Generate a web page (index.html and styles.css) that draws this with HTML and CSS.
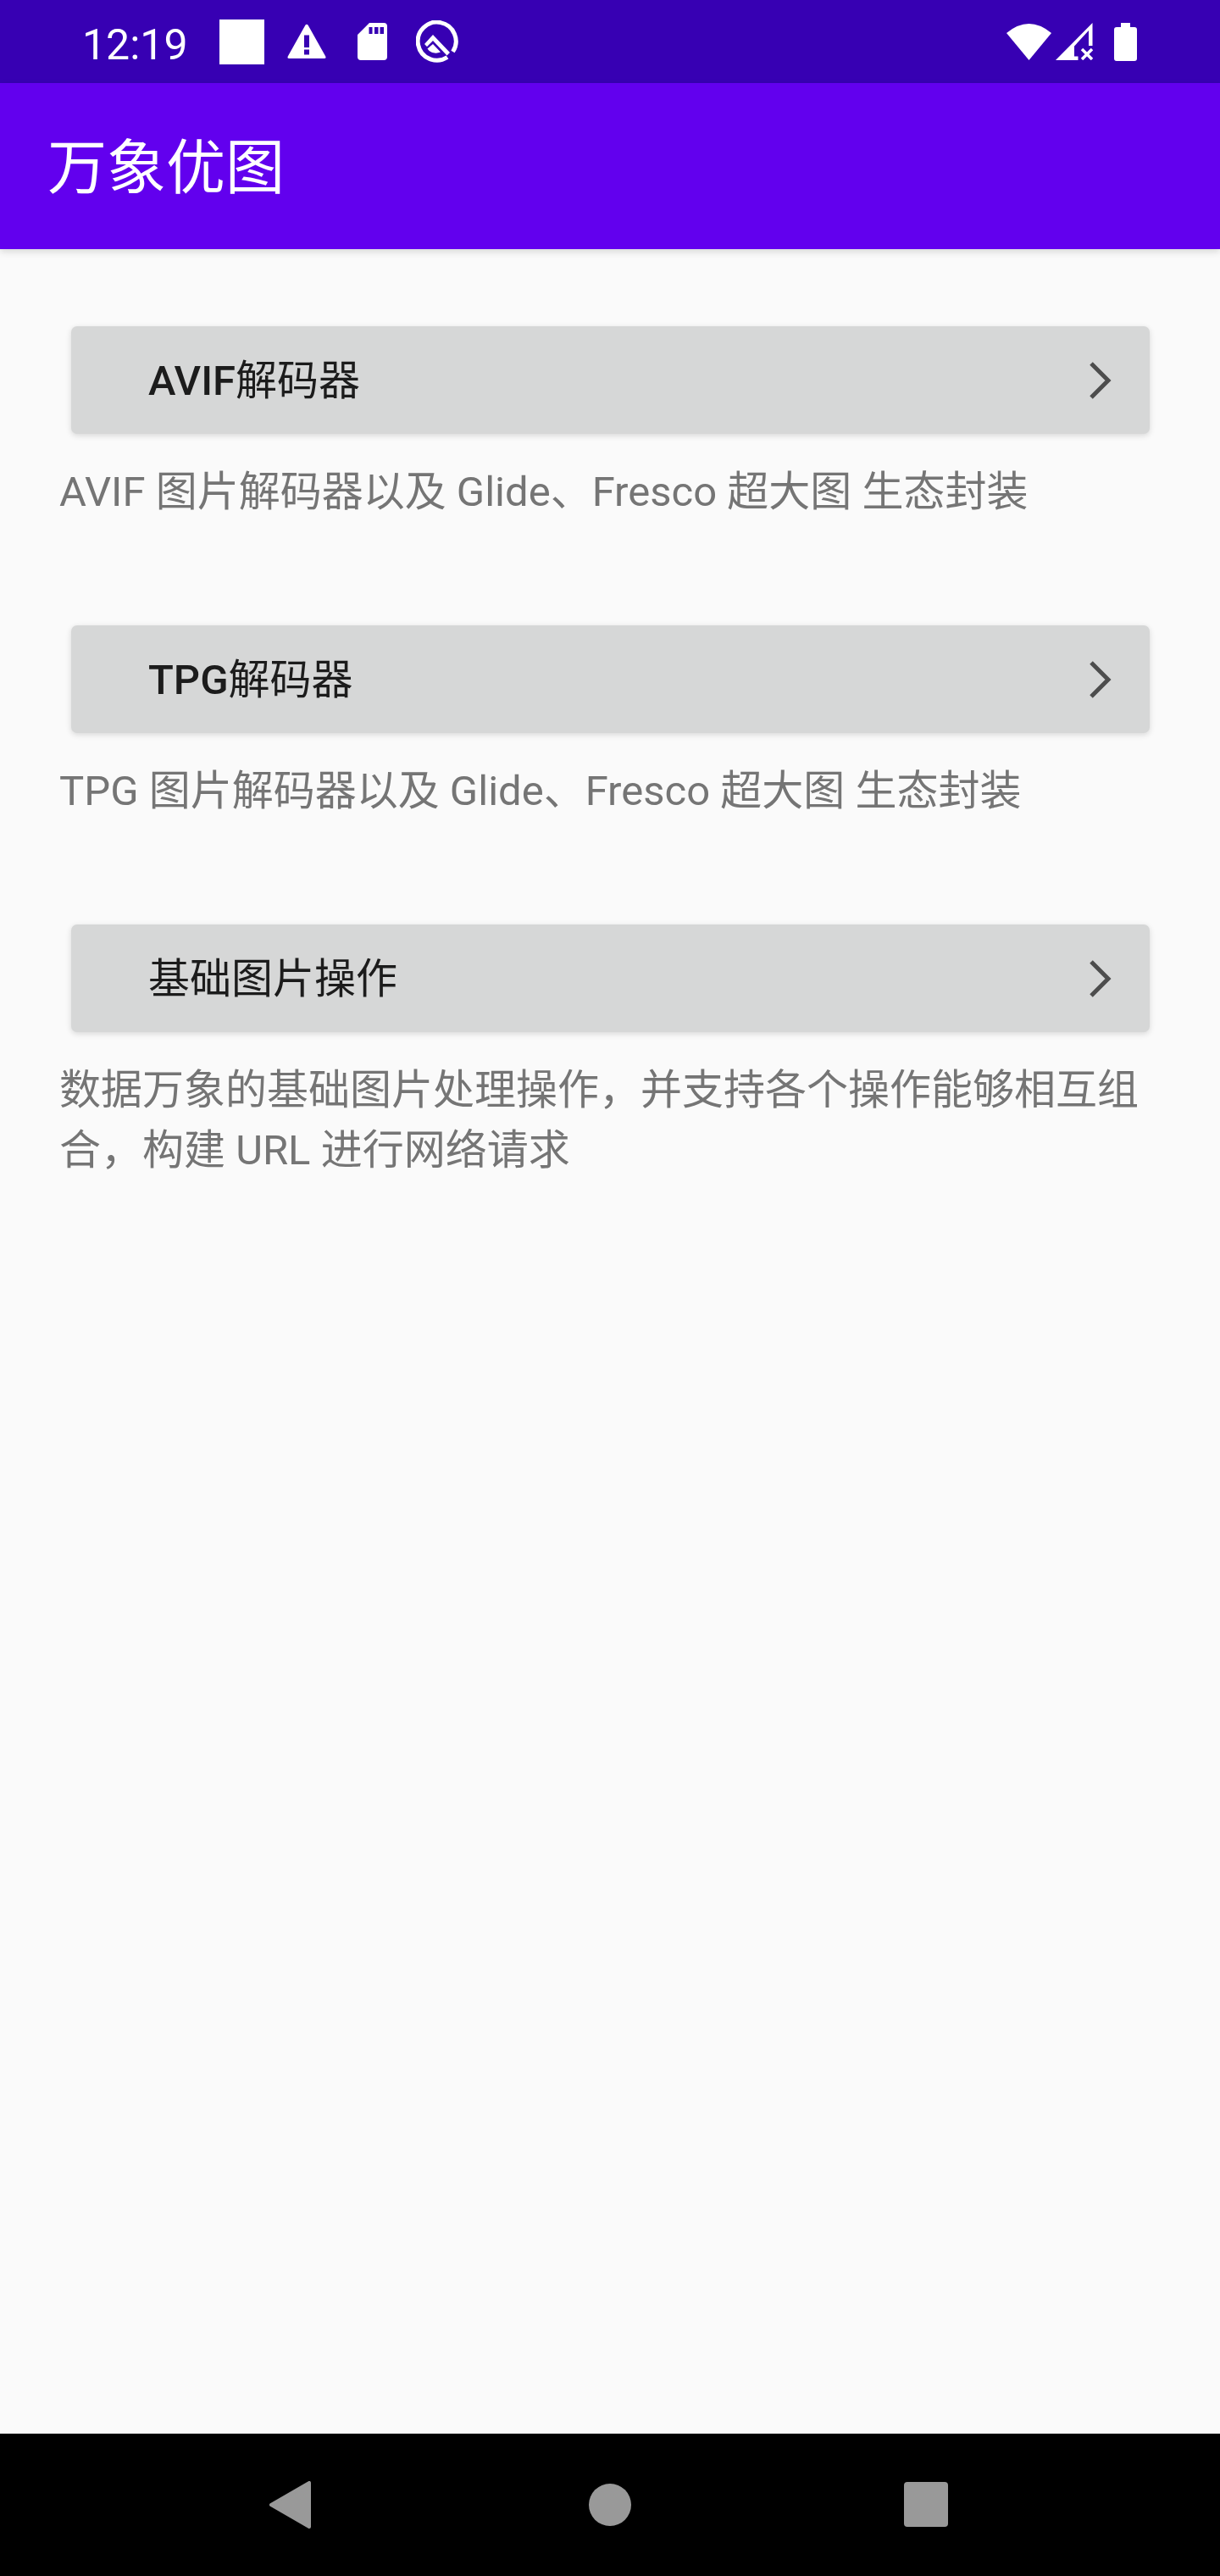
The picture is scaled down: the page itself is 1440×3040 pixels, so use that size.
FILE: index.html
```html
<!DOCTYPE html>
<html lang="zh-CN">
<head>
<meta charset="utf-8">
<title>万象优图</title>
<link rel="stylesheet" href="styles.css">
</head>
<body>
<div class="screen">
  <header class="status-bar">
    <span class="clock">12:19</span>
    <span class="blank-icon"></span>
    <svg class="icon warn" viewBox="0 0 46 42"><path fill="#fff" fill-rule="evenodd" d="M21.500 1.500 Q23 0 24.500 1.500 L45.500 39 Q46 41 44 41 L2 41 Q0 41 .5 39 Z M20 13.500 V28 H26 V13.500 Z M20 30.500 V36.500 H26 V30.500 Z"/></svg>
    <svg class="icon sd" viewBox="0 0 35 44"><path fill="#fff" fill-rule="evenodd" d="M14 0 H31 Q35 0 35 4 V40 Q35 44 31 44 H4 Q0 44 0 40 V14 Z M13.500 5 V13 H17.500 V5 Z M20 5 V13 H24.500 V5 Z M26.500 5 V13 H31 V5 Z"/></svg>
    <svg class="icon q" viewBox="0 0 50 50"><path fill="none" stroke="#fff" stroke-width="5" d="M37 43.500 A22.500 22.500 0 1 1 43.500 37"/><path fill="#fff" d="M20 17 L40 38 L36.500 41.500 L20 24 L13 31 L10 28 Z M20 28 L29 37.500 Q25 39 22 38.500 Q16 38 13.500 33.500 Z"/></svg>
    <span class="status-spacer"></span>
    <svg class="icon wifi" viewBox="0 0 53 44"><path fill="#fff" d="M0 12 Q26.500 -10 53 12 L26.500 44 Z"/></svg>
    <svg class="icon signal" viewBox="0 0 44 44"><path fill="#fff" d="M43.500 0 V27 H39 V9 L22 27.500 V39.500 H26.500 V44 H0 Z"/><path fill="none" stroke="#fff" stroke-width="3.500" d="M31 31 L43 43 M43 31 L31 43"/></svg>
    <svg class="icon battery" viewBox="0 0 27 45"><path fill="#fff" d="M8 0 H19 V5 H24 Q27 5 27 8 V42 Q27 45 24 45 H3 Q0 45 0 42 V8 Q0 5 3 5 H8 Z"/></svg>
  </header>
  <div class="app-bar"><h1 class="app-title">万象优图</h1></div>
  <main class="content">
    <section class="entry">
      <div class="entry-button"><span class="entry-label"><span class="latin">AVIF</span>解码器</span><svg class="chevron" viewBox="0 0 30 46"><path d="M4 3 L24 23 L4 43"/></svg></div>
      <p class="entry-desc">AVIF 图片解码器以及 Glide、Fresco 超大图 生态封装</p>
    </section>
    <section class="entry">
      <div class="entry-button"><span class="entry-label"><span class="latin">TPG</span>解码器</span><svg class="chevron" viewBox="0 0 30 46"><path d="M4 3 L24 23 L4 43"/></svg></div>
      <p class="entry-desc">TPG 图片解码器以及 Glide、Fresco 超大图 生态封装</p>
    </section>
    <section class="entry">
      <div class="entry-button"><span class="entry-label">基础图片操作</span><svg class="chevron" viewBox="0 0 30 46"><path d="M4 3 L24 23 L4 43"/></svg></div>
      <p class="entry-desc">数据万象的基础图片处理操作，并支持各个操作能够相互组合，构建 URL 进行网络请求</p>
    </section>
  </main>
  <footer class="nav-bar">
    <svg class="nav-back" viewBox="0 0 49 56"><path fill="#999" stroke="#999" stroke-width="4" stroke-linejoin="round" d="M2 28 L47 2 V54 Z"/></svg>
    <span class="nav-home"></span>
    <span class="nav-recent"></span>
  </footer>
</div>
</body>
</html>
```
FILE: styles.css
```css
* { box-sizing: border-box; }
html, body { margin: 0; padding: 0; }
body { font-family: Roboto, "Noto Sans CJK SC", sans-serif; background: #fafafa; }
.screen { width: 1440px; height: 3040px; display: flex; flex-direction: column; overflow: hidden; }

.status-bar { height: 98px; flex: none; background: #3700b3; display: flex; align-items: center; padding: 0 98px 0 97px; color: #fff; }
.clock { font-size: 50px; line-height: 1; padding-top: 8px; width: 162px; flex: none; }
.blank-icon { width: 53px; height: 53px; background: #fff; flex: none; margin-right: 27px; }
.icon { display: block; flex: none; }
.warn { width: 46px; height: 42px; margin-right: 37px; }
.sd { width: 35px; height: 44px; margin-right: 34px; }
.q { width: 50px; height: 50px; }
.status-spacer { flex: 1; }
.wifi { width: 53px; height: 44px; margin-right: 5px; }
.signal { width: 44px; height: 44px; margin-right: 25px; }
.battery { width: 27px; height: 45px; }

.app-bar { height: 196px; flex: none; background: #6200ee; display: flex; align-items: center; padding-left: 56px; box-shadow: 0 3px 8px rgba(0,0,0,.14); position: relative; }
.app-title { margin: 0; padding-top: 6px; font-size: 70px; font-weight: 400; color: #fff; line-height: 1; }

.content { flex: 1; padding: 91px 70px 0; }
.entry { height: 353px; }
.entry:last-child { height: auto; }
.entry-button { height: 127px; margin: 0 13px 0 14px; background: #d6d7d7; border-radius: 7px; box-shadow: 0 2px 7px rgba(0,0,0,.14); display: flex; align-items: center; justify-content: space-between; padding: 0 43px 0 91px; }
.entry-label { font-size: 49px; font-weight: 400; color: #1c1c1c; line-height: 1; padding-top: 2px; }
.latin { font-weight: 500; }
.chevron { width: 30px; height: 46px; }
.chevron path { fill: none; stroke: #4d4d4d; stroke-width: 5; }
.entry-desc { margin: 33px 0 0; font-size: 49px; line-height: 71px; color: #757575; }

.nav-bar { height: 168px; flex: none; background: #000; position: relative; }
.nav-back { position: absolute; left: 318px; top: 56px; width: 49px; height: 56px; }
.nav-home { position: absolute; left: 695px; top: 59px; width: 50px; height: 50px; border-radius: 50%; background: #999; }
.nav-recent { position: absolute; left: 1067px; top: 57px; width: 52px; height: 53px; border-radius: 4px; background: #999; }
```
